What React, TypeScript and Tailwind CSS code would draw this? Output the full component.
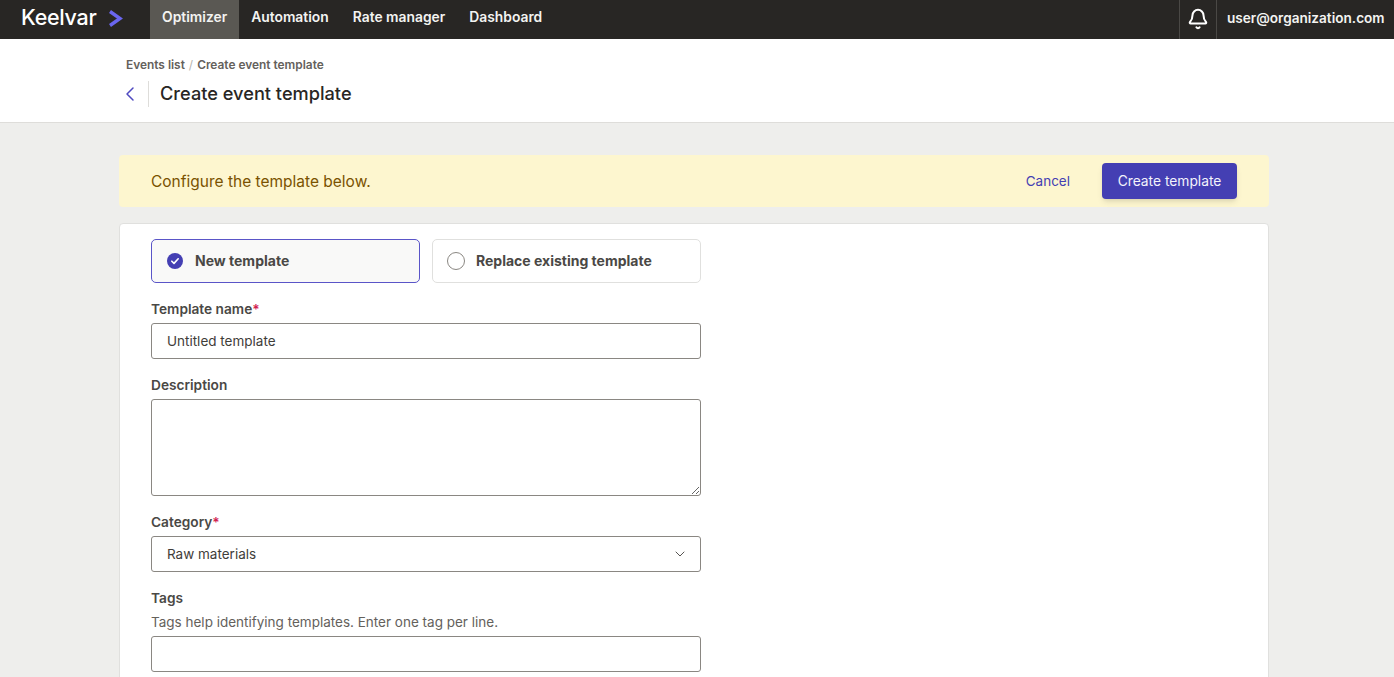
import { Bell, ChevronDown, ChevronLeft } from "lucide-react";

const navItems = ["Optimizer", "Automation", "Rate manager", "Dashboard"];

function FieldLabel({ text, required }: { text: string; required?: boolean }) {
  return (
    <label className="block text-[13.7px] leading-[18px] font-semibold text-[#4a4845]">
      {text}
      {required && <span className="text-[#d1234f]">*</span>}
    </label>
  );
}

function ModeOption({ label, selected }: { label: string; selected?: boolean }) {
  return (
    <div
      className={`flex h-11 w-full items-center gap-[11px] rounded-[5px] border px-[14px] ${
        selected ? "border-[#5a55c8] bg-[#f9f9f8]" : "border-[#e0e0de] bg-white"
      }`}
    >
      {selected ? (
        <svg width="18" height="18" viewBox="0 0 18 18" className="shrink-0">
          <circle cx="9" cy="9" r="8" fill="#443fb3" />
          <path d="M5.8 9.2l2.2 2.2 4.2-4.6" fill="none" stroke="#fff" strokeWidth="1.6" strokeLinecap="round" strokeLinejoin="round" />
        </svg>
      ) : (
        <span className="h-[18px] w-[18px] shrink-0 rounded-full border border-[#8a8782] bg-white" />
      )}
      <span className="pb-[1px] text-[14px] font-bold text-[#4a4845]">{label}</span>
    </div>
  );
}

export default function App() {
  return (
    <div className="h-[677px] overflow-hidden bg-[#eeeeec] font-['Inter',sans-serif]">
      <nav className="flex h-[39px] items-stretch bg-[#282624] text-white">
        <div className="flex w-[150px] items-center pb-[3px] pl-[21px]">
          <span className="text-[21.5px] leading-none font-medium tracking-[-0.3px] text-white">Keelvar</span>
          <svg width="15" height="17" viewBox="0 0 15 17" className="ml-[12px]">
            <path d="M2 1.5L12 8.5L2 15.5" fill="none" stroke="#6a66f0" strokeWidth="3.4" />
          </svg>
        </div>
        {navItems.map((item, i) => (
          <a
            key={item}
            className={`flex items-center px-3 pb-[5px] text-[13.85px] font-semibold ${
              i === 0 ? "bg-[#5a5853] text-[#f3f3f1]" : "text-[#f3f3f1]"
            }`}
          >
            {item}
          </a>
        ))}
        <div className="ml-auto flex items-stretch">
          <div className="flex w-[38px] items-center justify-center border-x border-[#4a4845] pb-[2px]">
            <Bell size={22} strokeWidth={2.2} />
          </div>
          <div className="flex w-[177px] items-center pb-[2px] pl-[10px] text-[13.6px] font-semibold text-[#f3f3f1]">
            user@organization.com
          </div>
        </div>
      </nav>

      <header className="h-[84px] border-b border-[#deddda] bg-white pt-[18px] pl-[126px]">
        <div className="flex items-center text-[11.9px] leading-4 font-semibold text-[#64615c]">
          <span>Events list</span>
          <span className="mx-[4px] font-normal text-[#b5b3ae]">/</span>
          <span>Create event template</span>
        </div>
        <div className="mt-[8px] flex h-[26px] items-center">
          <ChevronLeft size={24} strokeWidth={1.5} className="-ml-[8px] text-[#4f4ac0]" />
          <div className="mr-[11px] ml-[6px] h-[26px] w-px bg-[#deddda]" />
          <h1 className="text-[18.2px] font-medium text-[#282624]">Create event template</h1>
        </div>
      </header>

      <main className="mx-[119px] w-[1150px] pt-8">
        <div className="flex h-[52px] items-center justify-between rounded-[4px] bg-[#fdf6cf] pr-8 pl-8">
          <span className="pt-[1px] text-[15.5px] text-[#7a5200]">Configure the template below.</span>
          <div className="flex items-center gap-8">
            <a className="text-[13.5px] text-[#443fb3]">Cancel</a>
            <button className="h-9 w-[135px] rounded-[4px] bg-[#443fb3] text-[13.8px] text-[#f3f3fb] shadow-md">
              Create template
            </button>
          </div>
        </div>

        <section className="mt-4 h-[600px] rounded-[4px] border border-[#e0e0de] bg-white pt-[15px] pl-[31px]">
          <div className="w-[550px]">
            <div className="grid grid-cols-2 gap-3">
              <ModeOption label="New template" selected />
              <ModeOption label="Replace existing template" />
            </div>

            <div className="mt-[17px]">
              <FieldLabel text="Template name" required />
              <input
                readOnly
                value="Untitled template"
                className="mt-[5px] block h-9 w-full rounded-[3px] border border-[#8a8782] px-[15px] text-[13.5px] text-[#3f3d3a]"
              />
            </div>

            <div className="mt-[17px]">
              <FieldLabel text="Description" />
              <textarea className="mt-[5px] block h-[97px] w-full rounded-[3px] border border-[#8a8782] px-[15px]" />
            </div>

            <div className="mt-[17px]">
              <FieldLabel text="Category" required />
              <div className="mt-[5px] flex h-9 items-center justify-between rounded-[3px] border border-[#8a8782] pr-[12px] pl-[15px] text-[13.5px] text-[#3f3d3a]">
                <span>Raw materials</span>
                <ChevronDown size={16} strokeWidth={1.4} className="text-[#4a4845]" />
              </div>
            </div>

            <div className="mt-[17px]">
              <FieldLabel text="Tags" />
              <p className="mt-[6px] text-[13.5px] leading-[18px] text-[#64615c]">
                Tags help identifying templates. Enter one tag per line.
              </p>
              <input className="mt-[5px] block h-9 w-full rounded-[3px] border border-[#8a8782] px-[15px]" />
            </div>
          </div>
        </section>
      </main>
    </div>
  );
}
